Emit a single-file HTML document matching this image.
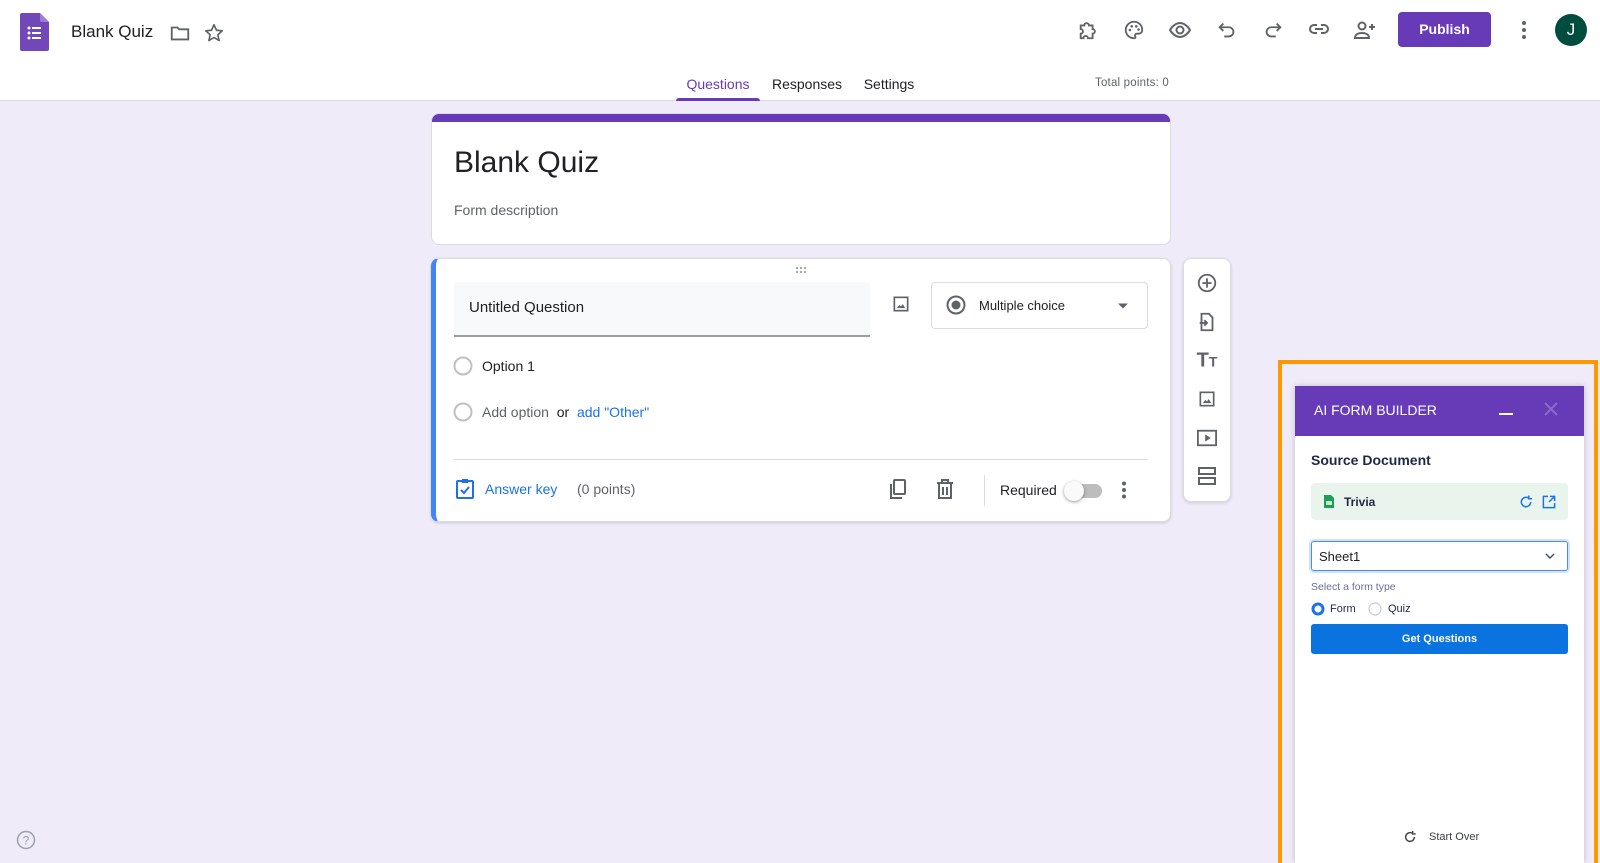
<!DOCTYPE html>
<html><head><meta charset="utf-8"><style>
*{box-sizing:border-box;margin:0;padding:0}
body{width:1600px;height:863px;overflow:hidden;background:#f0ebf8;font-family:"Liberation Sans",Arial,sans-serif;position:relative;color:#202124}
.a{position:absolute}
svg{display:block}
.top{left:0;top:0;width:1600px;height:101px;background:#fff;border-bottom:1px solid #dadce0}
.card{background:#fff;border-radius:8px;border:1px solid #dadce0}
.ic{position:absolute;transform:translate(-50%,-50%)}
</style></head><body>
<div class="a top"></div>
<svg class="a" style="left:20px;top:13px" width="29" height="38" viewBox="0 0 29 38"><path d="M2 0h18l9 9v27a2 2 0 0 1-2 2H2a2 2 0 0 1-2-2V2a2 2 0 0 1 2-2z" fill="#7248b9"/><path d="M20 0l9 9h-7a2 2 0 0 1-2-2z" fill="#9c7ad6"/><g fill="#fff"><circle cx="9" cy="15" r="1.5"/><circle cx="9" cy="20" r="1.5"/><circle cx="9" cy="25" r="1.5"/><rect x="12" y="14" width="9" height="2"/><rect x="12" y="19" width="9" height="2"/><rect x="12" y="24" width="9" height="2"/></g></svg>
<div class="a" style="left:71px;top:22px;font-size:17px">Blank Quiz</div>
<svg class="ic" style="left:180px;top:33px" width="22" height="22" viewBox="0 0 24 24"><path d="M3 6h6l2 2h10v11H3z" fill="none" stroke="#5f6368" stroke-width="2"/></svg>
<svg class="ic" style="left:214px;top:33px" width="22" height="22" viewBox="0 0 24 24"><path d="M12 3l2.7 6 6.3.6-4.8 4.3 1.4 6.3L12 17l-5.6 3.2 1.4-6.3L3 9.6l6.3-.6z" fill="none" stroke="#5f6368" stroke-width="1.8" stroke-linejoin="round"/></svg>

<svg class="ic" style="left:1088px;top:30px" width="22" height="22" viewBox="0 0 24 24"><path d="M4 7h4a2.5 2.5 0 0 1 5 0h4v4a2.5 2.5 0 0 1 0 5v5h-5a2.5 2.5 0 0 0-5 0H4v-5a2.5 2.5 0 0 0 0-5z" fill="none" stroke="#5f6368" stroke-width="2"/></svg>
<svg class="ic" style="left:1134px;top:30px" width="22" height="22" viewBox="0 0 24 24"><path d="M12 3a9 9 0 0 0 0 18c1.5 0 2-1 1.3-2.2-.7-1.2.2-2.8 1.7-2.8H17a4 4 0 0 0 4-4c0-5-4-9-9-9z" fill="none" stroke="#5f6368" stroke-width="2"/><g fill="#5f6368"><circle cx="7.5" cy="12" r="1.4"/><circle cx="9.5" cy="8" r="1.4"/><circle cx="14.5" cy="8" r="1.4"/><circle cx="17" cy="11.5" r="1.4"/></g></svg>
<svg class="ic" style="left:1180px;top:30px" width="24" height="24" viewBox="0 0 24 24"><path d="M2 12s4-7 10-7 10 7 10 7-4 7-10 7S2 12 2 12z" fill="none" stroke="#5f6368" stroke-width="2"/><circle cx="12" cy="12" r="3.5" fill="none" stroke="#5f6368" stroke-width="2"/></svg>
<svg class="ic" style="left:1227px;top:30px" width="22" height="22" viewBox="0 0 24 24"><path d="M8 5L4 9l4 4M4 9h10a5 5 0 0 1 0 10h-5" fill="none" stroke="#5f6368" stroke-width="2"/></svg>
<svg class="ic" style="left:1273px;top:30px" width="22" height="22" viewBox="0 0 24 24"><path d="M16 5l4 4-4 4M20 9H10a5 5 0 0 0 0 10h5" fill="none" stroke="#5f6368" stroke-width="2"/></svg>
<svg class="ic" style="left:1319px;top:29px" width="24" height="24" viewBox="0 0 24 24"><path d="M10 8H7a4 4 0 0 0 0 8h3M14 8h3a4 4 0 0 1 0 8h-3M8 12h8" fill="none" stroke="#5f6368" stroke-width="2"/></svg>
<svg class="ic" style="left:1365px;top:30px" width="24" height="24" viewBox="0 0 24 24"><circle cx="9" cy="8" r="3.5" fill="none" stroke="#5f6368" stroke-width="2"/><path d="M2 20c0-4 4-5 7-5s7 1 7 5z M19 6v6M16 9h6" fill="none" stroke="#5f6368" stroke-width="2"/></svg>
<div class="a" style="left:1398px;top:12px;width:93px;height:35px;background:#673ab7;border-radius:4px;color:#fff;font-size:14px;font-weight:bold;text-align:center;line-height:35px">Publish</div>
<svg class="ic" style="left:1524px;top:30px" width="6" height="20" viewBox="0 0 6 20"><circle cx="3" cy="3" r="2" fill="#5f6368"/><circle cx="3" cy="10" r="2" fill="#5f6368"/><circle cx="3" cy="17" r="2" fill="#5f6368"/></svg>
<div class="a" style="left:1555px;top:14px;width:32px;height:32px;border-radius:50%;background:#004d40;color:#fff;font-size:17px;text-align:center;line-height:32px">J</div>

<div class="a" style="left:676px;top:76px;width:84px;text-align:center;font-size:14px;color:#673ab7">Questions</div>
<div class="a" style="left:676px;top:98px;width:84px;height:3px;background:#673ab7;border-radius:3px 3px 0 0"></div>
<div class="a" style="left:767px;top:76px;width:80px;text-align:center;font-size:14px">Responses</div>
<div class="a" style="left:854px;top:76px;width:70px;text-align:center;font-size:14px">Settings</div>
<div class="a" style="left:1095px;top:77px;font-size:11.5px;color:#5f6368;letter-spacing:0.2px">Total points: 0</div>

<div class="a card" style="left:431px;top:113px;width:740px;height:132px;overflow:hidden"><div style="height:8px;background:#673ab7"></div></div>
<div class="a" style="left:454px;top:146px;font-size:30px">Blank Quiz</div>
<div class="a" style="left:454px;top:202px;font-size:14px;color:#5f6368">Form description</div>

<div class="a card" style="left:431px;top:258px;width:740px;height:264px;border-left:5px solid #4285f4;box-shadow:0 1px 3px rgba(0,0,0,.15)"></div>
<svg class="ic" style="left:801px;top:270px" width="14" height="8" viewBox="0 0 14 8"><g fill="#9aa0a6"><circle cx="3" cy="2" r="1.1"/><circle cx="7" cy="2" r="1.1"/><circle cx="11" cy="2" r="1.1"/><circle cx="3" cy="6" r="1.1"/><circle cx="7" cy="6" r="1.1"/><circle cx="11" cy="6" r="1.1"/></g></svg>
<div class="a" style="left:454px;top:282px;width:416px;height:55px;background:#f8f9fa;border-bottom:2px solid #9e9e9e"></div>
<div class="a" style="left:469px;top:299px;font-size:15px">Untitled Question</div>
<svg class="ic" style="left:901px;top:304px" width="20" height="20" viewBox="0 0 24 24"><rect x="4" y="4" width="16" height="16" fill="none" stroke="#5f6368" stroke-width="2"/><path d="M7 17l3-4 2 2 2-3 3 5z" fill="#5f6368"/></svg>
<div class="a" style="left:931px;top:282px;width:217px;height:47px;border:1px solid #dadce0;border-radius:4px"></div>
<svg class="ic" style="left:956px;top:305px" width="20" height="20" viewBox="0 0 20 20"><circle cx="10" cy="10" r="8.5" fill="none" stroke="#5f6368" stroke-width="2"/><circle cx="10" cy="10" r="4.5" fill="#5f6368"/></svg>
<div class="a" style="left:979px;top:298px;font-size:13px">Multiple choice</div>
<svg class="ic" style="left:1123px;top:306px" width="10" height="5" viewBox="0 0 10 5"><path d="M0 0h10L5 5z" fill="#5f6368"/></svg>

<svg class="ic" style="left:463px;top:366px" width="20" height="20" viewBox="0 0 20 20"><circle cx="10" cy="10" r="8.5" fill="none" stroke="#bdc1c6" stroke-width="2"/></svg>
<div class="a" style="left:482px;top:358px;font-size:14px">Option 1</div>
<svg class="ic" style="left:463px;top:412px" width="20" height="20" viewBox="0 0 20 20"><circle cx="10" cy="10" r="8.5" fill="none" stroke="#bdc1c6" stroke-width="2"/></svg>
<div class="a" style="left:482px;top:404px;font-size:14px;color:#5f6368">Add option <span style="color:#202124">&nbsp;or&nbsp;</span> <span style="color:#1a73e8">add "Other"</span></div>
<div class="a" style="left:454px;top:459px;width:694px;height:1px;background:#dadce0"></div>

<svg class="ic" style="left:465px;top:489px" width="20" height="22" viewBox="0 0 20 22"><rect x="2" y="3" width="16" height="17" rx="1" fill="none" stroke="#1a73e8" stroke-width="2"/><rect x="7" y="1" width="6" height="4" fill="#1a73e8"/><path d="M6 12l3 3 5-6" fill="none" stroke="#1a73e8" stroke-width="2"/></svg>
<div class="a" style="left:485px;top:481px;font-size:14px;color:#1a73e8">Answer key</div>
<div class="a" style="left:577px;top:481px;font-size:14px;color:#5f6368">(0 points)</div>
<svg class="ic" style="left:898px;top:489px" width="20" height="22" viewBox="0 0 20 22"><rect x="6" y="2" width="11" height="14" rx="1" fill="none" stroke="#5f6368" stroke-width="2"/><path d="M3 6v14h11" fill="none" stroke="#5f6368" stroke-width="2"/></svg>
<svg class="ic" style="left:945px;top:489px" width="18" height="20" viewBox="0 0 18 20"><path d="M1 4h16M6 4V1h6v3M3 4v15h12V4M7 8v8M11 8v8" fill="none" stroke="#5f6368" stroke-width="2"/></svg>
<div class="a" style="left:984px;top:475px;width:1px;height:31px;background:#dadce0"></div>
<div class="a" style="left:1000px;top:482px;font-size:14px">Required</div>
<div class="a" style="left:1068px;top:484px;width:34px;height:14px;border-radius:7px;background:#bdbdbd"></div>
<div class="a" style="left:1064px;top:481px;width:20px;height:20px;border-radius:50%;background:#fafafa;box-shadow:0 1px 3px rgba(0,0,0,.4)"></div>
<svg class="ic" style="left:1124px;top:490px" width="6" height="18" viewBox="0 0 6 18"><circle cx="3" cy="2.5" r="2" fill="#5f6368"/><circle cx="3" cy="9" r="2" fill="#5f6368"/><circle cx="3" cy="15.5" r="2" fill="#5f6368"/></svg>

<div class="a card" style="left:1183px;top:258px;width:48px;height:244px;box-shadow:0 1px 3px rgba(0,0,0,.15)"></div>
<svg class="ic" style="left:1207px;top:283px" width="22" height="22" viewBox="0 0 24 24"><circle cx="12" cy="12" r="9" fill="none" stroke="#5f6368" stroke-width="2"/><path d="M12 7v10M7 12h10" stroke="#5f6368" stroke-width="2"/></svg>
<svg class="ic" style="left:1207px;top:322px" width="22" height="22" viewBox="0 0 24 24"><path d="M6 3h8l4 4v14H6z" fill="none" stroke="#5f6368" stroke-width="2"/><path d="M4 13h8M9 10l3 3-3 3" fill="none" stroke="#5f6368" stroke-width="2"/></svg>
<div class="ic" style="left:1207px;top:361px;font-size:20px;font-weight:bold;color:#5f6368">T<span style="font-size:14px">T</span></div>
<svg class="ic" style="left:1207px;top:399px" width="20" height="20" viewBox="0 0 24 24"><rect x="4" y="4" width="16" height="16" fill="none" stroke="#5f6368" stroke-width="2"/><path d="M7 17l3-4 2 2 2-3 3 5z" fill="#5f6368"/></svg>
<svg class="ic" style="left:1207px;top:438px" width="22" height="20" viewBox="0 0 24 22"><rect x="2" y="3" width="20" height="16" fill="none" stroke="#5f6368" stroke-width="2"/><path d="M10 7v8l6-4z" fill="#5f6368"/></svg>
<svg class="ic" style="left:1207px;top:476px" width="20" height="20" viewBox="0 0 20 20"><rect x="2" y="2" width="16" height="6" fill="none" stroke="#5f6368" stroke-width="2"/><rect x="2" y="12" width="16" height="6" fill="none" stroke="#5f6368" stroke-width="2"/></svg>

<svg class="ic" style="left:26px;top:840px" width="20" height="20" viewBox="0 0 20 20"><circle cx="10" cy="10" r="8.5" fill="none" stroke="#9aa0a6" stroke-width="1.5"/><text x="10" y="14.5" text-anchor="middle" font-size="12" fill="#9aa0a6" font-family="Liberation Sans">?</text></svg>

<div class="a" style="left:1278px;top:360px;width:320px;height:503px;border:4px solid #ff9800;border-bottom:none"></div>
<div class="a" style="left:1295px;top:386px;width:289px;height:477px;background:#fff;box-shadow:0 0 6px rgba(0,0,0,.2)"></div>
<div class="a" style="left:1295px;top:386px;width:289px;height:50px;background:#673ab7"></div>
<div class="a" style="left:1314px;top:402px;font-size:14px;color:#fff">AI FORM BUILDER</div>
<div class="a" style="left:1499px;top:413px;width:14px;height:2px;background:#fff"></div>
<svg class="ic" style="left:1551px;top:409px" width="14" height="14" viewBox="0 0 14 14"><path d="M1 1l12 12M13 1L1 13" stroke="#8a6cc8" stroke-width="2"/></svg>
<div class="a" style="left:1311px;top:452px;font-size:14px;font-weight:bold;color:#1f2746">Source Document</div>
<div class="a" style="left:1311px;top:483px;width:257px;height:37px;background:#e9f5ec;border-radius:4px"></div>
<svg class="a" style="left:1324px;top:495px" width="10" height="13" viewBox="0 0 10 13"><path d="M0 0h7l3 3v10H0z" fill="#1e9e54"/><rect x="2" y="6" width="6" height="4" fill="#c8ecd5"/></svg>
<div class="a" style="left:1344px;top:495px;font-size:12px;font-weight:bold;color:#1f2746">Trivia</div>
<svg class="ic" style="left:1526px;top:502px" width="15" height="15" viewBox="0 0 16 16"><path d="M13 8a5 5 0 1 1-2-4M11 1v3.5h3.5" fill="none" stroke="#1a73e8" stroke-width="1.6"/></svg>
<svg class="ic" style="left:1549px;top:502px" width="15" height="15" viewBox="0 0 16 16"><path d="M7 2H2v12h12V9M9 2h5v5M14 2L8 8" fill="none" stroke="#1a73e8" stroke-width="1.6"/></svg>
<div class="a" style="left:1311px;top:541px;width:257px;height:30px;border:1px solid #4a90e2;border-radius:3px;box-shadow:0 0 0 2px #cfe2fa"></div>
<div class="a" style="left:1319px;top:549px;font-size:13px">Sheet1</div>
<svg class="ic" style="left:1550px;top:556px" width="10" height="6" viewBox="0 0 10 6"><path d="M1 1l4 4 4-4" fill="none" stroke="#3c4a6b" stroke-width="1.4"/></svg>
<div class="a" style="left:1311px;top:581px;font-size:10.5px;color:#6b6f9a">Select a form type</div>
<svg class="ic" style="left:1318px;top:609px" width="14" height="14" viewBox="0 0 14 14"><circle cx="7" cy="7" r="5" fill="none" stroke="#1a73e8" stroke-width="3"/></svg>
<div class="a" style="left:1330px;top:603px;font-size:11px;color:#1f2746">Form</div>
<svg class="ic" style="left:1375px;top:609px" width="14" height="14" viewBox="0 0 14 14"><circle cx="7" cy="7" r="6" fill="none" stroke="#c7c9e0" stroke-width="1.2"/></svg>
<div class="a" style="left:1388px;top:603px;font-size:11px;color:#1f2746">Quiz</div>
<div class="a" style="left:1311px;top:624px;width:257px;height:30px;background:#0a73e0;border-radius:3px;color:#fff;font-size:11px;font-weight:bold;text-align:center;line-height:30px">Get Questions</div>
<svg class="ic" style="left:1410px;top:837px" width="14" height="14" viewBox="0 0 16 16"><path d="M13 8a5 5 0 1 1-2-4M11 1v3.5h3.5" fill="none" stroke="#3c4043" stroke-width="1.6"/></svg>
<div class="a" style="left:1429px;top:831px;font-size:11px;color:#3c4043">Start Over</div>
</body></html>
